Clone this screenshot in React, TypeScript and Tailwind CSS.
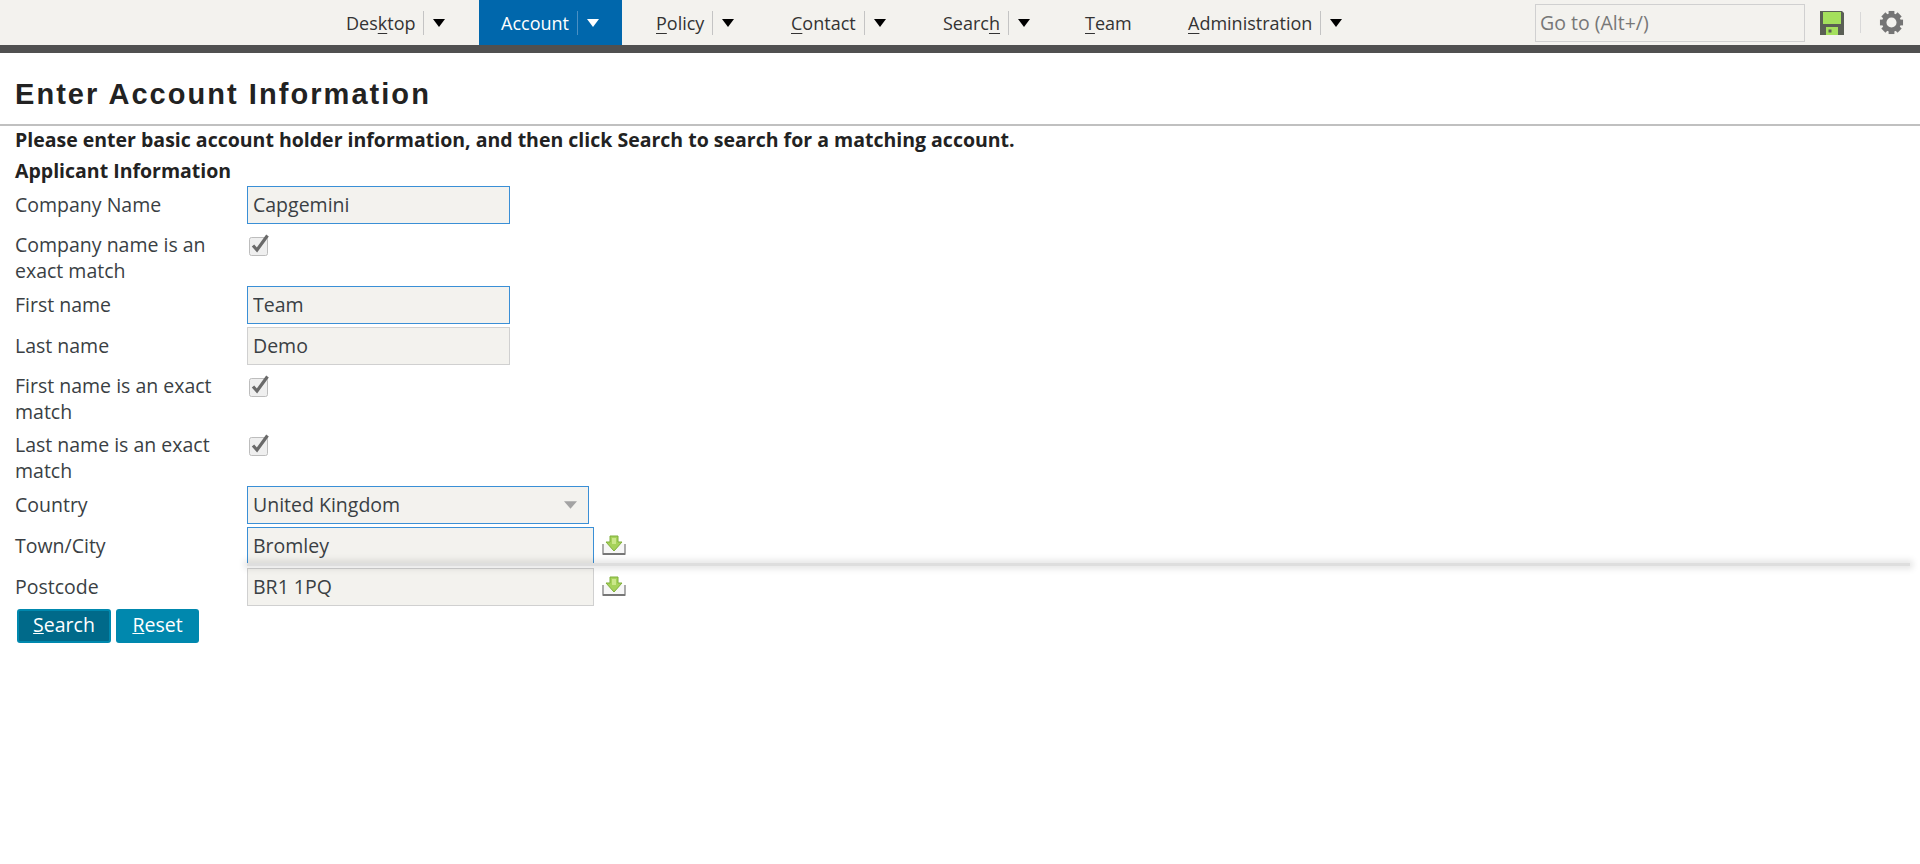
import React from 'react';

const NavArrow = ({ light = false }: { light?: boolean }) => (
  <svg width="12" height="8" viewBox="0 0 12 8" className={light ? 'fill-white' : 'fill-black'}>
    <path d="M0 0h12L6 8z" />
  </svg>
);

function NavItem({ width, active, menu = true, children }: { width: string; active?: boolean; menu?: boolean; children: React.ReactNode }) {
  return (
    <div className={`${width} h-full flex items-center pl-[22px] shrink-0 ${active ? 'bg-[#0067ac] text-white' : 'text-[#333]'}`}>
      <span className="whitespace-nowrap underline-offset-[3px]">{children}</span>
      {menu && (
        <>
          <span className={`ml-2 w-px h-6 ${active ? 'bg-[#4a90c4]' : 'bg-[#c4c4c4]'}`} />
          <span className="ml-[9px] flex"><NavArrow light={active} /></span>
        </>
      )}
    </div>
  );
}

function SaveIcon() {
  return (
    <svg width="24" height="24" viewBox="0 0 24 24">
      <path d="M0 0h22l2 2v22H0z" fill="#5a5f55" />
      <rect x="3" y="1" width="18" height="12" fill="#a4e05c" />
      <rect x="6" y="16" width="12" height="8" fill="#a4e05c" />
      <rect x="8.5" y="18.5" width="3" height="3" fill="#5a5f55" />
    </svg>
  );
}

function GearIcon() {
  const angles = [0, 45, 90, 135, 180, 225, 270, 315];
  return (
    <svg width="25" height="25" viewBox="0 0 26 26" className="fill-[#757575]">
      {angles.map((a) => (
        <rect key={a} x="10" y="1" width="6" height="5" transform={`rotate(${a} 13 13)`} />
      ))}
      <circle cx="13" cy="13" r="7.5" fill="none" stroke="#757575" strokeWidth="4.5" />
    </svg>
  );
}

function CheckIcon() {
  return (
    <svg width="24" height="24" viewBox="0 0 24 24" className="block">
      <rect x="2.5" y="4.5" width="18" height="18" rx="2" fill="#efefef" stroke="#bdbdbd" />
      <path d="M6 12.5l4 4.5L20.5 2.5" fill="none" stroke="#6a6a6a" strokeWidth="3.2" />
    </svg>
  );
}

function FetchIcon() {
  return (
    <svg width="24" height="20" viewBox="0 0 24 20" className="block">
      <path d="M1 9v10h22V9" fill="#f7f7f7" stroke="#8a8a8a" strokeWidth="1.4" />
      <path d="M1 19h22" stroke="#777" strokeWidth="2" />
      <path d="M8 1h8v6h4l-8 9-8-9h4z" fill="#a6d25a" stroke="#7fae3a" />
      <path d="M10 3h4v6h-4z" fill="#cbe78a" />
    </svg>
  );
}

const fieldBase = 'h-[38px] bg-[#f3f2ee] border px-[5px] text-[#3a3f44] outline-none';

function TextRow({ label, value, focused, fetch }: { label: string; value: string; focused?: boolean; fetch?: boolean }) {
  return (
    <div className="flex h-[38px] mb-[3px] items-center">
      <div className="w-[247px] pl-[15px] shrink-0">{label}</div>
      <input
        defaultValue={value}
        className={`${fieldBase} pb-px ${fetch ? 'w-[347px]' : 'w-[263px]'} ${focused ? 'border-[#3a8fd6]' : 'border-[#d0d0d0]'}`}
      />
      {fetch && <span className="ml-2 mb-[2px]"><FetchIcon /></span>}
    </div>
  );
}

function CheckRow({ label }: { label: React.ReactNode }) {
  return (
    <div className="flex h-[59px]">
      <div className="w-[247px] pl-[15px] pr-[20px] pt-[5px] shrink-0">{label}</div>
      <div className="pt-[6px]"><CheckIcon /></div>
    </div>
  );
}

export default function App() {
  return (
    <div className="relative min-h-[864px] bg-white text-[19.5px] leading-[26px] text-[#3a3f44] font-['Open_Sans',sans-serif]">
      {/* Top nav */}
      <div className="flex h-[45px] bg-[#f3f2ee] pl-[324px] pr-[16px]">
        <div className="flex h-full text-[18px]">
          <NavItem width="w-[155px]">Des<u>k</u>top</NavItem>
          <NavItem width="w-[143px] mr-[12px]" active>Account</NavItem>
          <NavItem width="w-[135px]"><u>P</u>olicy</NavItem>
          <NavItem width="w-[152px]"><u>C</u>ontact</NavItem>
          <NavItem width="w-[142px]">Searc<u>h</u></NavItem>
          <NavItem width="w-[103px]" menu={false}><u>T</u>eam</NavItem>
          <NavItem width="w-[190px]"><u>A</u>dministration</NavItem>
        </div>
        <div className="ml-auto flex items-center">
          <input
            placeholder="Go to (Alt+/)"
            className="w-[270px] h-[38px] bg-[#f3f2ee] border border-[#d0d0d0] px-[4px] outline-none placeholder:text-[#777]"
          />
          <span className="ml-[15px] flex"><SaveIcon /></span>
          <span className="ml-4 w-px h-[21px] bg-[#d8d8d8]" />
          <span className="ml-[18px] flex"><GearIcon /></span>
        </div>
      </div>
      <div className="h-[8px] bg-[#505050]" />

      {/* Heading */}
      <div className="h-[71px] flex items-center pl-[15px] pt-[10px]">
        <h1 className="font-['Liberation_Sans',sans-serif] font-bold text-[29px] tracking-[2.05px] text-[#222]">Enter Account Information</h1>
      </div>
      <div className="h-[2px] bg-[#c0c0c0]" />

      {/* Form */}
      <div className="font-bold text-[#222] pl-[15px] pt-px">Please enter basic account holder information, and then click Search to search for a matching account.</div>
      <div className="font-bold text-[#222] pl-[15px] mt-[5px] mb-[2px]">Applicant Information</div>

      <TextRow label="Company Name" value="Capgemini" focused />
      <CheckRow label="Company name is an exact match" />
      <TextRow label="First name" value="Team" focused />
      <TextRow label="Last name" value="Demo" />
      <CheckRow label="First name is an exact match" />
      <CheckRow label="Last name is an exact match" />

      <div className="flex h-[38px] mb-[3px] items-center">
        <div className="w-[247px] pl-[15px] shrink-0">Country</div>
        <div className={`${fieldBase} w-[342px] border-[#3a8fd6] flex items-center justify-between pr-[11px]`}>
          <span>United Kingdom</span>
          <svg width="13" height="8" viewBox="0 0 14 8" className="fill-[#a3a3a3]"><path d="M0 0h14L7 8z" /></svg>
        </div>
      </div>
      <TextRow label="Town/City" value="Bromley" focused fetch />
      <TextRow label="Postcode" value="BR1 1PQ" fetch />

      <div className="flex gap-[5px] pl-[17px]">
        <button className="w-[94px] h-[34px] pb-[2px] rounded-[3px] border-2 border-[#0088ae] bg-[#006a8a] text-white"><u>S</u>earch</button>
        <button className="w-[83px] h-[34px] pb-[2px] rounded-[3px] bg-[#0088ae] text-white"><u>R</u>eset</button>
      </div>

      {/* stray drag shadow lying over the form */}
      <div className="absolute left-[247px] right-[10px] top-[563px] h-[3px] bg-[#dedede] shadow-[0_0_6px_3px_rgba(0,0,0,0.1)]" />
    </div>
  );
}
